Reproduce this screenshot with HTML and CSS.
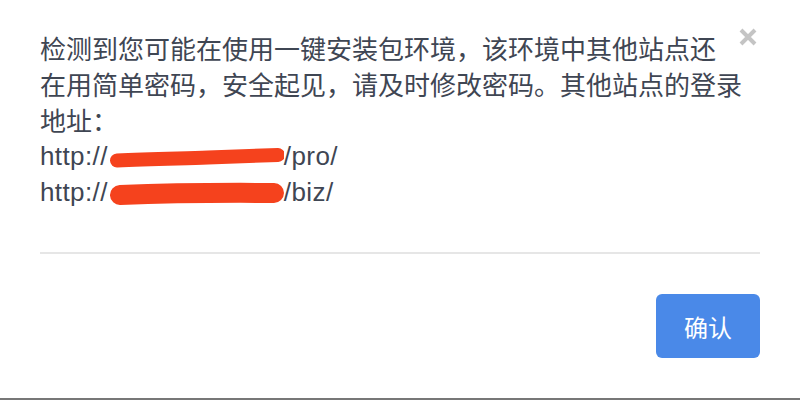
FILE: index.html
```html
<!DOCTYPE html>
<html lang="zh-CN">
<head>
  <meta charset="UTF-8">
  <meta name="viewport" content="width=device-width, initial-scale=1.0">
  <title>提示</title>
  <link rel="stylesheet" href="styles.css">
</head>
<body>
  <div class="dialog">
    <div class="dialog-body">
      <button class="close" aria-label="关闭">
        <svg width="20" height="20" viewBox="0 0 20 20">
          <path d="M3 3 L17 17 M17 3 L3 17" stroke="#c4c4c4" stroke-width="4"/>
        </svg>
      </button>
      <p class="msg">检测到您可能在使用一键安装包环境，该环境中其他站点还在用简单密码，安全起见，请及时修改密码。其他站点的登录地址：</p>
      <div class="links">
        <p class="link">http://<span class="mask"><svg width="176" height="36" viewBox="0 0 176 36">
          <path d="M9 22.5 C40 21, 70 20.5, 100 19.5 S150 17.5, 170 17" stroke="#f5421d" stroke-width="14" fill="none" stroke-linecap="round"/>
        </svg></span>/pro/</p>
        <p class="link">http://<span class="mask"><svg width="176" height="36" viewBox="0 0 176 36">
          <path d="M12 21 C50 19.5, 100 18.5, 166 19" stroke="#f5421d" stroke-width="20" fill="none" stroke-linecap="round"/>
        </svg></span>/biz/</p>
      </div>
    </div>
    <div class="divider"></div>
    <div class="dialog-footer">
      <button class="btn-ok">确认</button>
    </div>
  </div>
  <div class="under"></div>
</body>
</html>
```
FILE: styles.css
```css
html, body {
  margin: 0;
  padding: 0;
  background: #fff;
}
body {
  font-family: "Noto Sans CJK SC", "Noto Sans", sans-serif;
  color: #3f4653;
  height: 400px;
  display: flex;
  flex-direction: column;
  overflow: hidden;
}
.dialog {
  flex: 1;
  padding: 30px 40px 0 40px;
}
.dialog-body {
  font-size: 26px;
  line-height: 36px;
}
.close {
  float: right;
  width: 20px;
  height: 20px;
  margin: -3px 2px 0 10px;
  padding: 0;
  border: none;
  background: none;
  cursor: pointer;
}
.close svg {
  display: block;
}
.msg,
.link {
  margin: 0;
}
.link {
  font-family: "Liberation Sans", "Noto Sans CJK SC", sans-serif;
  letter-spacing: 0.4px;
  white-space: nowrap;
}
.mask {
  display: inline-block;
  width: 176px;
  height: 36px;
  vertical-align: top;
}
.mask svg {
  display: block;
}
.divider {
  height: 2px;
  background: #e6e6e6;
  margin-top: 42px;
}
.dialog-footer {
  display: flex;
  justify-content: flex-end;
  padding-top: 40px;
}
.btn-ok {
  width: 104px;
  height: 64px;
  border: none;
  border-radius: 6px;
  background: #4a89e8;
  color: #fff;
  font-family: "Noto Sans CJK SC", sans-serif;
  font-size: 24px;
  cursor: pointer;
}
.under {
  height: 2px;
  background: #777;
}
```
